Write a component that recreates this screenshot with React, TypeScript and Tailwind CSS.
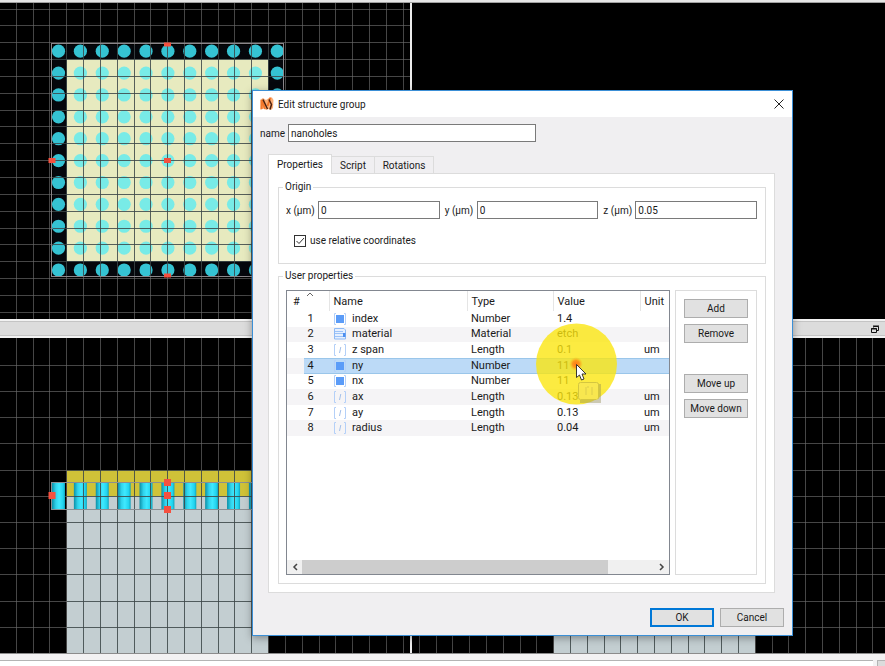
import { useState, type ReactNode } from "react";

type Kind = "Number" | "Material" | "Length";
type Row = { id: number; name: string; type: Kind; value: string; unit?: string };

const ROWS: Row[] = [
  { id: 1, name: "index", type: "Number", value: "1.4" },
  { id: 2, name: "material", type: "Material", value: "etch" },
  { id: 3, name: "z span", type: "Length", value: "0.1", unit: "um" },
  { id: 4, name: "ny", type: "Number", value: "11" },
  { id: 5, name: "nx", type: "Number", value: "11" },
  { id: 6, name: "ax", type: "Length", value: "0.13", unit: "um" },
  { id: 7, name: "ay", type: "Length", value: "0.13", unit: "um" },
  { id: 8, name: "radius", type: "Length", value: "0.04", unit: "um" },
];

const range = (n: number) => Array.from({ length: n }, (_, i) => i);

function GridLines({ x0, dx, nx, y0, dy, ny }: { x0: number; dx: number; nx: number; y0: number; dy: number; ny: number }) {
  return (
    <g stroke="#6c6c6c" strokeOpacity="0.65" strokeWidth="1">
      {range(nx).map((i) => {
        const x = Math.floor(x0 + i * dx) + 0.5;
        return <line key={"v" + i} x1={x} x2={x} y1="0" y2="1000" />;
      })}
      {range(ny).map((i) => {
        const y = Math.floor(y0 + i * dy) + 0.5;
        return <line key={"h" + i} x1="0" x2="2000" y1={y} y2={y} />;
      })}
    </g>
  );
}

/* Darker grid segments drawn where the grid crosses a solid body. */
function BodyGrid({ x, y, w, h, x0, dx, y0, dy }: { x: number; y: number; w: number; h: number; x0: number; dx: number; y0: number; dy: number }) {
  const xs = range(60).map((i) => Math.floor(x0 + i * dx) + 0.5).filter((v) => v >= x && v <= x + w);
  const ys = range(60).map((i) => Math.floor(y0 + i * dy) + 0.5).filter((v) => v >= y && v <= y + h);
  return (
    <g stroke="#3c4648" strokeOpacity="0.85">
      {xs.map((v) => <line key={"v" + v} x1={v} x2={v} y1={y} y2={y + h} />)}
      {ys.map((v) => <line key={"h" + v} x1={x} x2={x + w} y1={v} y2={v} />)}
    </g>
  );
}

function Handle({ x, y, h = 7 }: { x: number; y: number; h?: number }) {
  return <rect x={x - 3.5} y={y - h / 2} width="7" height={h} fill="#f5503f" />;
}

function TopView() {
  return (
    <svg className="block size-full bg-black" aria-label="XY view">
      <g transform="translate(0 -3)">
        <GridLines x0={16.3} dx={16.82} nx={24} y0={9} dy={16.85} ny={19} />
        <rect x="53" y="45" width="230" height="231" fill="#05070c" />
        <rect x="67" y="59" width="201" height="202" fill="#e7eabf" />
        {range(11).map((r) =>
          range(11).map((c) => {
            const edge = r === 0 || c === 0 || r === 10 || c === 10;
            return <circle key={r + "-" + c} cx={58.5 + c * 21.88} cy={51.2 + r * 21.88} r="6.6" fill={edge ? "#35c3d3" : "#78ebe7"} />;
          })
        )}
        <BodyGrid x={53} y={45} w={230} h={231} x0={16.3} dx={16.82} y0={9} dy={16.85} />
        <rect x="51.5" y="43.5" width="232" height="233" fill="none" stroke="#8a868a" />
        <Handle x={167.5} y={44.5} h={4} />
        <Handle x={52} y={160.5} h={5} />
        <Handle x={167.5} y={160.5} h={5} />
        <Handle x={167.5} y={275.5} h={4} />
      </g>
    </svg>
  );
}

function SideView() {
  return (
    <svg className="block size-full bg-black" aria-label="XZ view">
      <defs>
        <linearGradient id="rod">
          <stop offset="0" stopColor="#0c8fa6" />
          <stop offset="0.3" stopColor="#2fd3ec" />
          <stop offset="0.55" stopColor="#3fe9ff" />
          <stop offset="0.85" stopColor="#22d3ee" />
          <stop offset="1" stopColor="#0fa3bb" />
        </linearGradient>
      </defs>
      <g transform="translate(0 -338)">
        <GridLines x0={16.3} dx={16.82} nx={24} y0={365.2} dy={26.22} ny={12} />
        <rect x="67" y="470" width="201" height="26" fill="#cfc238" />
        <rect x="67" y="496" width="201" height="160" fill="#c3ced1" />
        {range(11).map((c) => (
          <rect key={c} x={52 + c * 21.88} y="483" width="13" height="26" fill="url(#rod)" />
        ))}
        <BodyGrid x={67} y={470} w={201} h={190} x0={16.3} dx={16.82} y0={365.2} dy={26.22} />
        <rect x="51.5" y="482.5" width="232" height="27" fill="none" stroke="#8a8f93" />
        <Handle x={167.5} y={482.5} />
        <Handle x={167.5} y={495.5} />
        <Handle x={167.5} y={509.5} />
        <Handle x={52} y={495.5} />
      </g>
    </svg>
  );
}

function FrontView() {
  return (
    <svg className="block size-full bg-black" aria-label="YZ view">
      <g transform="translate(-412 -338)">
        <GridLines x0={419.3} dx={16.8} nx={60} y0={365.2} dy={26.22} ny={12} />
        <rect x="554" y="496" width="201" height="160" fill="#c3ced1" />
        <BodyGrid x={554} y={496} w={201} h={160} x0={419.3} dx={16.8} y0={365.2} dy={26.22} />
      </g>
    </svg>
  );
}

function TypeIcon({ type }: { type: Kind }) {
  return (
    <svg width="12" height="12" viewBox="0 0 12 12" className="block shrink-0">
      {type === "Material" ? (
        <>
          <path d="M.5.5h9.500l1.500 1.500v9h-11z" fill="#e6f0ff" stroke="#8fbaf5" />
          <path d="M1 3.500h8M1 5.500h8M1 8.500h8" stroke="#9cc3f8" />
          <rect x="9" y="5" width="2.500" height="4" fill="#4d8ff0" />
        </>
      ) : (
        <path d="M2 .5H.5v11H2M10 .5h1.500v11H10" fill="none" stroke="#b4d0f8" />
      )}
      {type === "Number" && <rect x="2" y="2" width="8" height="8" fill="#5b9cf8" />}
      {type === "Length" && <path d="M6.800 3 5.500 9" stroke="#a3c0ea" />}
    </svg>
  );
}

function Logo() {
  return (
    <svg width="14" height="14" viewBox="0 0 14 14">
      <path d="M0 3 3 1l3 2 3-2 3-.5 1.500 2.500-.5 8-2 2-2.500-1-2 1-3-1.500-3 1.500z" fill="#fbae76" />
      <path d="M1.500 12 2 3l3 9M7.500 9l3-8.500" stroke="#f4772a" strokeWidth="2" fill="none" />
      <path d="M3 2.500 7.500 12M9 2.500l2.500 5-1.500 5" stroke="#4d200e" strokeWidth="1.500" fill="none" />
    </svg>
  );
}

function Group({ title, className, children }: { title: string; className: string; children: ReactNode }) {
  return (
    <fieldset className={"min-w-0 border border-[#dcdcdc] pl-[7px] pr-2 " + className}>
      <legend className="-ml-[3px] h-[14px] px-0.5 leading-[14px]">{title}</legend>
      {children}
    </fieldset>
  );
}

const BUTTON = "h-[19px] w-16 shrink-0 border border-[#adadad] bg-[#e1e1e1] text-center leading-[16px]";

function Coordinate({ axis, value }: { axis: string; value: string }) {
  return (
    <label className="flex min-w-0 flex-1 items-center">
      <span className="w-8 shrink-0 whitespace-nowrap">{axis} (µm)</span>
      <input defaultValue={value} className="h-[18px] w-full min-w-0 border border-[#7a7a7a] bg-white px-0.5" />
    </label>
  );
}

function Dialog() {
  const [selected, setSelected] = useState(4);
  return (
    <section
      role="dialog"
      aria-labelledby="dialog-title"
      className="absolute left-[252px] top-[90px] flex w-[541px] flex-col border border-[#3b8fd6] bg-[#f0eff1] shadow-[0_2px_8px_rgba(0,0,0,0.35)]"
    >
      <header className="flex h-[26px] items-center gap-1 bg-white pl-[7px] pr-2">
        <Logo />
        <h1 id="dialog-title" className="flex-1">Edit structure group</h1>
        <button aria-label="Close">
          <svg width="10" height="10" viewBox="0 0 10 10" stroke="#222" fill="none"><path d="M.5.5l9 9M9.500.5l-9 9" /></svg>
        </button>
      </header>

      <div className="flex items-center pl-[7px] pt-[7px]">
        <label htmlFor="group-name" className="w-7">name</label>
        <input id="group-name" defaultValue="nanoholes" className="h-[18px] w-[248px] border border-[#7a7a7a] bg-white px-0.5" />
      </div>

      <div className="pl-[15px] pr-[17px] pt-3">
        <div role="tablist" className="relative -mb-px flex items-end">
          <button role="tab" aria-selected="true" className="h-5 w-16 border border-b-0 border-[#dcdcdc] bg-white">Properties</button>
          <button role="tab" aria-selected="false" className="h-[18px] w-[43px] border-y border-r border-[#dcdcdc] bg-[#f0eff1]">Script</button>
          <button role="tab" aria-selected="false" className="h-[18px] w-[59px] border-y border-r border-[#dcdcdc] bg-[#f0eff1]">Rotations</button>
        </div>

        <div role="tabpanel" className="border border-[#dcdcdc] bg-white pb-2 pl-[9px] pr-2 pt-1.5">
          <Group title="Origin" className="h-[84px]">
            <div className="flex gap-[5px] pt-[7px]">
              <Coordinate axis="x" value="0" />
              <Coordinate axis="y" value="0" />
              <Coordinate axis="z" value="0.05" />
            </div>
            <label className="ml-2 mt-3.5 flex items-center gap-1">
              <span className="grid">
                <input type="checkbox" defaultChecked className="peer col-start-1 row-start-1 size-3 appearance-none border border-[#333] bg-white" />
                <svg viewBox="0 0 12 12" className="invisible col-start-1 row-start-1 size-3 peer-checked:visible"><path d="M2.500 6 5 8.500 10 3" stroke="#333" fill="none" /></svg>
              </span>
              use relative coordinates
            </label>
          </Group>

          <Group title="User properties" className="mt-[5px] pb-2">
            <div className="flex items-stretch gap-[5px] pt-[7px]">
              <div className="flex h-[285px] min-w-0 flex-1 flex-col border border-[#828790] bg-white">
                <table className="h-[145px] w-full table-fixed border-collapse text-left text-[11px]">
                  <colgroup>
                    <col className="w-[17px]" />
                    <col className="w-[25px]" />
                    <col className="w-[138px]" />
                    <col className="w-[86px]" />
                    <col className="w-[87px]" />
                    <col />
                  </colgroup>
                  <thead>
                    <tr className="h-5 leading-[19px]">
                      <th colSpan={2} className="border-r border-[#e5e5e5] p-0 pl-1.5 font-normal">
                        <span className="flex items-start">
                          #
                          <svg width="8" height="5" viewBox="0 0 8 5" className="ml-1.5" stroke="#666" fill="none"><path d="M1 4 4 1l3 3" /></svg>
                        </span>
                      </th>
                      <th className="border-r border-[#e5e5e5] p-0 pl-1 font-normal">Name</th>
                      <th className="border-r border-[#e5e5e5] p-0 pl-1 font-normal">Type</th>
                      <th className="border-r border-[#e5e5e5] p-0 pl-1 font-normal">Value</th>
                      <th className="p-0 pl-1 font-normal">Unit</th>
                    </tr>
                  </thead>
                  <tbody>
                    {ROWS.map((row) => {
                      const tone = row.id === selected ? "bg-[#bcdaf7] p-0 shadow-[inset_0_1px_#9ac6ea,inset_0_-1px_#9ac6ea]" : "p-0";
                      return (
                        <tr key={row.id} onClick={() => setSelected(row.id)} className="leading-[14px] even:bg-[#f5f4f6]">
                          <td className="p-0" />
                          <td className={tone}><span className="block pr-3 text-center">{row.id}</span></td>
                          <td className={tone}>
                            <span className="flex items-center gap-1.5 pl-[5px]"><TypeIcon type={row.type} />{row.name}</span>
                          </td>
                          <td className={tone}><span className="pl-1">{row.type}</span></td>
                          <td className={tone}><span className="pl-1">{row.value}</span></td>
                          <td className={tone}><span className="pl-1">{row.unit}</span></td>
                        </tr>
                      );
                    })}
                  </tbody>
                </table>
                <div className="mt-auto flex h-[14px] bg-[#f0f0f0]">
                  <button aria-label="Scroll left" className="grid w-[15px] place-items-center">
                    <svg width="6" height="8" viewBox="0 0 6 8" stroke="#444" strokeWidth="1.500" fill="none"><path d="M5 1 2 4l3 3" /></svg>
                  </button>
                  <div className="flex flex-1"><div className="w-[87%] bg-[#cdcdcd]" /></div>
                  <button aria-label="Scroll right" className="grid w-[15px] place-items-center">
                    <svg width="6" height="8" viewBox="0 0 6 8" stroke="#444" strokeWidth="1.500" fill="none"><path d="M1 1l3 3-3 3" /></svg>
                  </button>
                </div>
              </div>
              <div className="flex w-[82px] flex-col items-center gap-1.5 border border-[#dcdcdc] pt-2">
                <button className={BUTTON}>Add</button>
                <button className={BUTTON}>Remove</button>
                <button className={BUTTON + " mt-[25px]"}>Move up</button>
                <button className={BUTTON}>Move down</button>
              </div>
            </div>
          </Group>
        </div>
      </div>

      <footer className="flex justify-end gap-1.5 px-2 pb-2 pt-[15px]">
        <button className="h-[19px] w-16 border-2 border-[#0078d7] bg-[#e1e1e1] leading-[14px]">OK</button>
        <button className={BUTTON}>Cancel</button>
      </footer>
    </section>
  );
}

function ClickHighlight() {
  return (
    <svg width="84" height="84" viewBox="0 0 84 84" className="pointer-events-none absolute left-[535px] top-[322px]">
      <defs>
        <radialGradient id="click">
          <stop offset="0" stopColor="#ff7a1a" />
          <stop offset="0.5" stopColor="#fb9a1c" />
          <stop offset="1" stopColor="#fbc51c" stopOpacity="0" />
        </radialGradient>
      </defs>
      <circle cx="41.500" cy="42" r="40.500" fill="#fbe60c" fillOpacity="0.78" />
      <circle cx="41" cy="42" r="7" fill="url(#click)" />
      <path d="M45 78h18V62h3v19H45z" fill="#8f8a50" fillOpacity="0.4" />
      <rect x="43.500" y="60.500" width="20" height="17" rx="2" fill="#f5e660" fillOpacity="0.5" stroke="#d4c640" />
      <path d="M51 65v8M52 65h2M57 65v8" stroke="#dccd4c" fill="none" />
      <path d="M41.500 42.500v13l3-2.500 2 5 2.500-1-2-5h4z" fill="#fff" stroke="#222" strokeWidth="0.900" />
    </svg>
  );
}

export default function App() {
  return (
    <main className="relative flex h-screen flex-col overflow-hidden bg-[#f0f0f0] font-['Roboto','Noto_Sans',sans-serif] text-[10px] text-[#1a1a1a]">
      <div className="h-[3px] shrink-0 border-b border-[#a0a0a0] bg-[#e6e6e6]" />
      <div className="flex h-[316px] shrink-0">
        <div className="w-[410px] shrink-0"><TopView /></div>
        <div className="w-0.5 shrink-0 bg-[#ececec]" />
        <div className="flex-1 bg-black" />
      </div>
      <div className="flex h-[19px] shrink-0 items-stretch border-y-2 border-[#f2f2f2]">
        <div className="flex flex-1 items-center justify-end border-y border-[#c4c4c4] bg-[#dcdcdc] pr-1.5">
          <button aria-label="Restore view">
            <svg width="8" height="8" viewBox="0 0 8 8" stroke="#111" fill="none"><path d="M2.500 2.500v-1h5v4h-2M2 1h6M.5 3.500h5v4h-5zM0 4h6" /></svg>
          </button>
        </div>
      </div>
      <div className="flex min-h-0 flex-1">
        <div className="w-[410px] shrink-0"><SideView /></div>
        <div className="w-0.5 shrink-0 bg-[#ececec]" />
        <div className="min-w-0 flex-1"><FrontView /></div>
      </div>
      <div className="flex h-[13px] shrink-0 items-end border-t border-[#8c8c8c] bg-[#f3f2f3]">
        <div className="h-1.5 flex-1 border-t border-[#b4b4b4] bg-white" />
        <div className="ml-1 h-1.5 w-2 border-l border-t border-[#b4b4b4] bg-[#dcdcdc]" />
      </div>
      <Dialog />
      <ClickHighlight />
    </main>
  );
}
